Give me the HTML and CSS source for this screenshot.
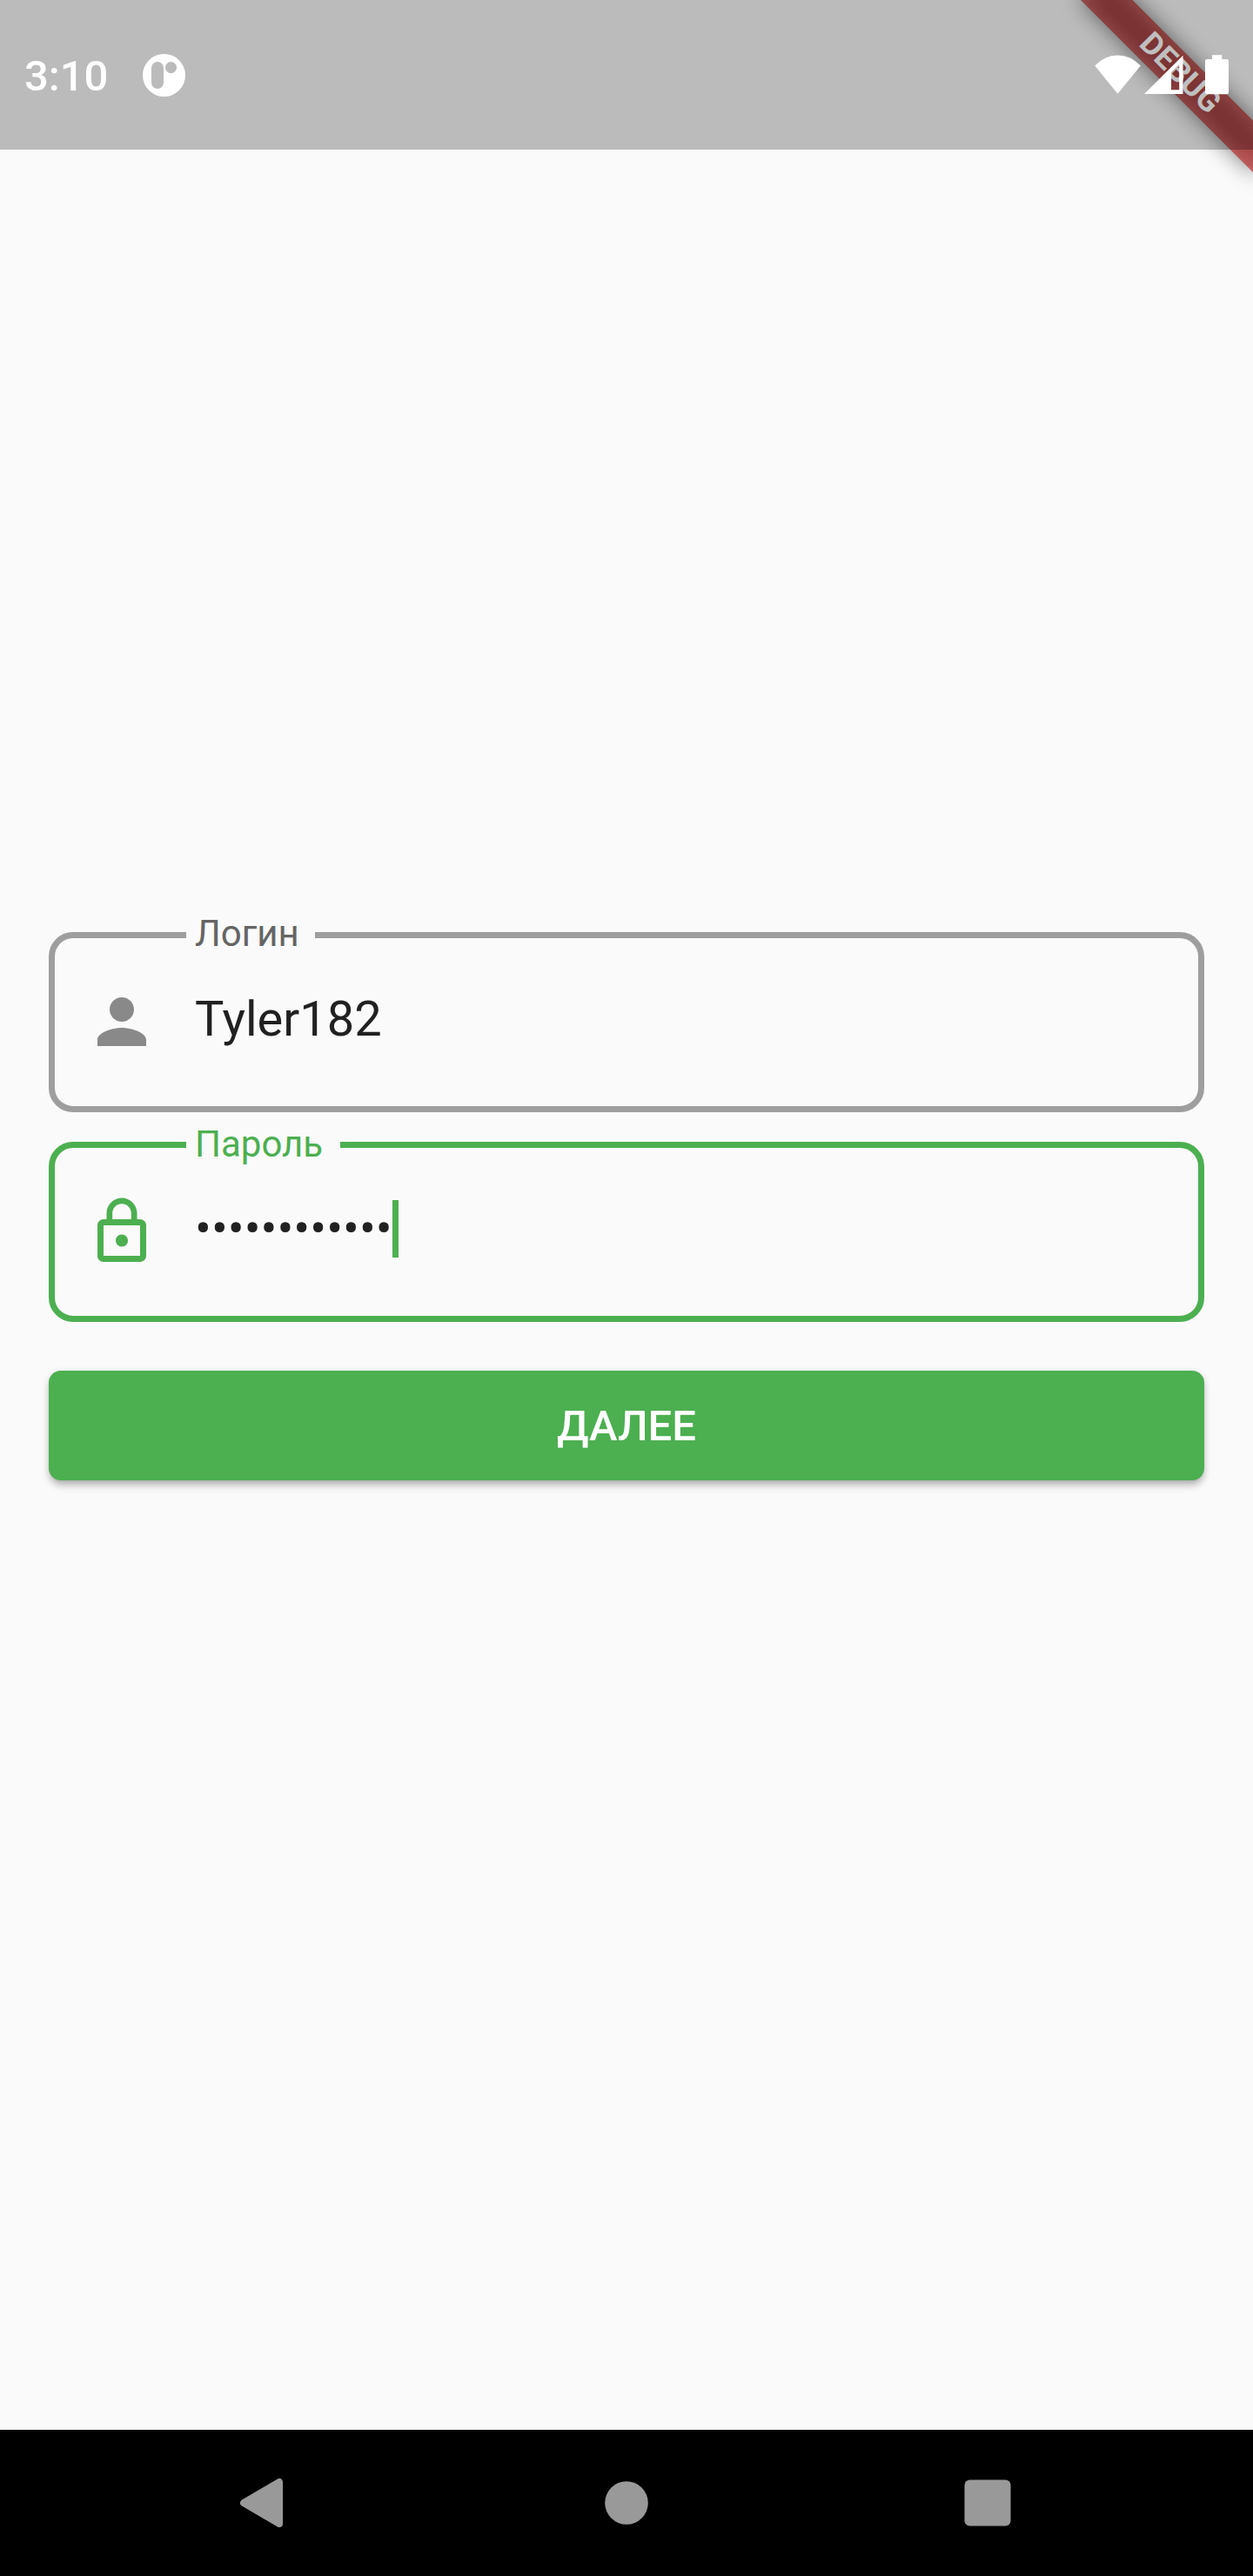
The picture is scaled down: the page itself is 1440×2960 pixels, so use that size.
FILE: index.html
```html
<!DOCTYPE html>
<html lang="ru">
<head>
<meta charset="utf-8">
<title>Вход</title>
<link rel="stylesheet" href="styles.css">
</head>
<body>
<div class="screen">
  <div class="banner-corner"><div class="banner"><span>DEBUG</span></div></div>

  <header class="status-bar">
    <span class="clock">3:10</span>
    <svg class="app-icon" width="49" height="49" viewBox="0 0 49 49"><path fill="#fff" fill-rule="evenodd" d="M24.500 0a24.500 24.500 0 1 1 0 49a24.500 24.500 0 0 1 0-49ZM17 9a7 7 0 0 0-7 7v17a7 7 0 0 0 14 0V16a7 7 0 0 0-7-7ZM32.500 9a6.600 6.600 0 1 0 0 13.200a6.600 6.600 0 0 0 0-13.200Z"/></svg>
    <div class="indicators">
      <svg width="54" height="46" viewBox="0 0 54 46"><path fill="#fff" d="M0.300 12.500Q12 0.500 26.500 0.500T52.800 12.500L26.500 44.800Z"/></svg>
      <svg class="signal" width="45" height="46" viewBox="0 0 45 46"><path fill="#fff" fill-rule="evenodd" d="M0 45L44.500 0.800V45ZM31 19.800V40.300H40.200V10.800Z"/></svg>
      <svg class="battery" width="27" height="46" viewBox="0 0 27 46"><path fill="#fff" d="M8 .3h11.300V5H24.500Q27 5 27 7.500v35Q27 45.300 24.500 45.300h-22Q0 45.300 0 42.500v-35Q0 5 2.500 5H8Z"/></svg>
    </div>
  </header>

  <main class="form">
    <div class="field">
      <span class="label">Логин</span>
      <svg class="field-icon" viewBox="0 0 24 24"><path fill="currentColor" d="M12 12c2.210 0 4-1.790 4-4s-1.790-4-4-4-4 1.790-4 4 1.790 4 4 4zm0 2c-2.670 0-8 1.340-8 4v2h16v-2c0-2.660-5.330-4-8-4z"/></svg>
      <span class="value">Tyler182</span>
    </div>
    <div class="field focused">
      <span class="label">Пароль</span>
      <svg class="field-icon" viewBox="0 0 24 24"><path fill="currentColor" d="M12 17c1.100 0 2-.9 2-2s-.9-2-2-2-2 .9-2 2 .9 2 2 2zm6-9h-1V6c0-2.760-2.240-5-5-5S7 3.240 7 6v2H6c-1.100 0-2 .9-2 2v10c0 1.100.9 2 2 2h12c1.100 0 2-.9 2-2V10c0-1.100-.9-2-2-2zM8.900 6c0-1.710 1.390-3.100 3.100-3.100s3.100 1.390 3.100 3.100v2H8.900V6zM18 20H6V10h12v10z"/></svg>
      <span class="value">••••••••••••</span><i class="caret"></i>
    </div>
    <button class="submit" type="button">ДАЛЕЕ</button>
  </main>

  <nav class="nav-bar">
    <svg width="84" height="84" viewBox="0 0 84 84"><path fill="#999" stroke="#999" stroke-width="8" stroke-linejoin="round" d="M17 42L58 18V66Z"/></svg>
    <svg width="84" height="84" viewBox="0 0 84 84"><circle cx="42" cy="42" r="24.800" fill="#999"/></svg>
    <svg width="84" height="84" viewBox="0 0 84 84"><rect x="15.500" y="15.500" width="53" height="53" rx="6" fill="#999"/></svg>
  </nav>
</div>
</body>
</html>
```
FILE: styles.css
```css
* { box-sizing: border-box; }

body {
  margin: 0;
  font-family: Roboto, "Noto Sans", sans-serif;
}

svg { display: block; flex: none; }

.screen {
  position: relative;
  display: flex;
  flex-direction: column;
  width: 1440px;
  height: 2960px;
  overflow: hidden;
  background: #fafafa;
}

/* Corner ribbon, sits under the translucent status bar */
.banner-corner {
  position: absolute;
  top: 0;
  right: 0;
  width: 0;
  height: 0;
  transform: rotate(45deg);
}

.banner {
  position: absolute;
  left: -140px;
  top: 98px;
  width: 280px;
  height: 42px;
  display: flex;
  align-items: center;
  justify-content: center;
  color: #fff;
  font-size: 35.7px;
  font-weight: 700;
  line-height: 1;
}

.banner::before,
.banner::after {
  content: "";
  position: absolute;
  inset: 0;
}

.banner::before {
  background: rgba(0, 0, 0, .5);
  filter: blur(12.600px);
}

.banner::after { background: rgba(183, 28, 28, .627); }

.banner span { position: relative; z-index: 1; }

.status-bar {
  position: relative;
  flex: none;
  display: flex;
  align-items: flex-start;
  height: 172px;
  padding: 62px 28px 0;
  background: rgba(0, 0, 0, .25);
  color: #fff;
}

.clock {
  width: 136px;
  font-size: 49px;
  font-weight: 500;
  line-height: 52px;
}

.indicators {
  display: flex;
  margin: 1px 0 0 auto;
}

.signal { margin-left: 3px; }
.battery { margin-left: 25px; }

.form {
  flex: 1;
  display: flex;
  flex-direction: column;
  padding: 899px 56px 0;
}

.field {
  position: relative;
  display: flex;
  align-items: center;
  height: 206.500px;
  margin-bottom: 34.500px;
  padding-left: 35px;
  border: 7px solid #9e9e9e;
  border-radius: 28px;
  color: #898989;
}

.field.focused {
  margin-bottom: 56px;
  border-color: #4caf50;
  color: #4caf50;
}

.label {
  position: absolute;
  left: 151px;
  top: -30px;
  padding: 0 18px 0 10px;
  background: #fafafa;
  color: #656565;
  font-size: 42px;
  line-height: 49px;
}

.focused .label {
  top: -29px;
  padding-right: 20px;
  color: #4caf50;
}

.field-icon {
  width: 84px;
  height: 84px;
  margin-right: 42px;
}

.value {
  padding-bottom: 7px;
  color: #212121;
  font-size: 56px;
  line-height: 66px;
}

.caret {
  width: 7px;
  height: 66px;
  margin-bottom: 7px;
  background: #4caf50;
}

.submit {
  height: 126px;
  padding: 2px 0 0;
  border: 0;
  border-radius: 14px;
  background: #4caf50;
  box-shadow: 0 7px 10px -2px rgba(0, 0, 0, .25), 0 2px 8px rgba(0, 0, 0, .12);
  color: #fff;
  font: 500 49px/57px Roboto, "Noto Sans", sans-serif;
}

.nav-bar {
  flex: none;
  display: flex;
  align-items: center;
  justify-content: center;
  gap: 331px;
  height: 168px;
  background: #000;
}
```
